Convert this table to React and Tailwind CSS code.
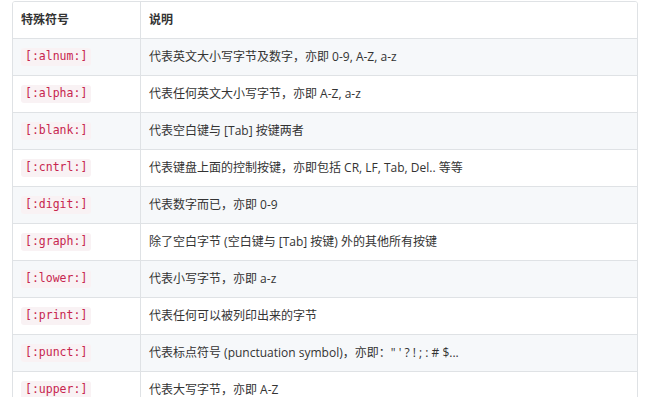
import React from "react";

const rows = [
  ["[:alnum:]", "代表英文大小写字节及数字，亦即 0-9, A-Z, a-z"],
  ["[:alpha:]", "代表任何英文大小写字节，亦即 A-Z, a-z"],
  ["[:blank:]", "代表空白键与 [Tab] 按键两者"],
  ["[:cntrl:]", "代表键盘上面的控制按键，亦即包括 CR, LF, Tab, Del.. 等等"],
  ["[:digit:]", "代表数字而已，亦即 0-9"],
  ["[:graph:]", "除了空白字节 (空白键与 [Tab] 按键) 外的其他所有按键"],
  ["[:lower:]", "代表小写字节，亦即 a-z"],
  ["[:print:]", "代表任何可以被列印出来的字节"],
  ["[:punct:]", "代表标点符号 (punctuation symbol)，亦即：\" ' ? ! ; : # $..."],
  ["[:upper:]", "代表大写字节，亦即 A-Z"],
];

export default function App() {
  return (
    <div
      className="bg-white pl-3 pr-[22px] pt-px h-[397px] overflow-hidden text-[12px] text-[#333]"
      style={{ fontFamily: '"Open Sans","Noto Sans CJK SC",sans-serif' }}
    >
      <div className="border border-[#dfe2e5] rounded-[3px] overflow-hidden">
        <div className="flex h-9 items-center bg-white">
          <div className="w-[128px] h-full border-r border-[#dfe2e5] pl-2 flex items-center font-bold">
            特殊符号
          </div>
          <div className="pl-2 font-bold">说明</div>
        </div>
        {rows.map(([code, desc], i) => (
          <div
            key={code}
            className={`flex h-[37px] border-t border-[#dfe2e5] ${i % 2 === 0 ? "bg-[#f6f8fa]" : "bg-white"}`}
          >
            <div className="w-[128px] h-full border-r border-[#dfe2e5] pl-2 flex items-center">
              <code
                className="bg-[#f9f2f4] text-[#c7254e] rounded-[3px] px-1 h-[18px] flex items-center text-[11.5px]"
                style={{ fontFamily: '"DejaVu Sans Mono","Liberation Mono",monospace' }}
              >
                {code}
              </code>
            </div>
            <div className="pl-2 flex items-center whitespace-nowrap">{desc}</div>
          </div>
        ))}
      </div>
    </div>
  );
}
